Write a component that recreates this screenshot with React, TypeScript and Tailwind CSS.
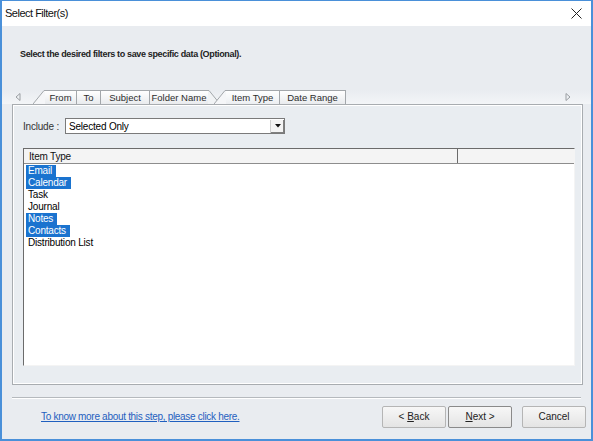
const items = [
  { name: "Email", sel: true },
  { name: "Calendar", sel: true },
  { name: "Task", sel: false },
  { name: "Journal", sel: false },
  { name: "Notes", sel: true },
  { name: "Contacts", sel: true },
  { name: "Distribution List", sel: false },
];

function Slant({ right = false }: { right?: boolean }) {
  // the sloped edge of an Office style tab
  return (
    <svg width="12" height="14" viewBox="0 0 12 14" className="block shrink-0">
      {right ? (
        <>
          <path d="M0 0.5 L1 0.5 L12 14 L0 14 Z" fill="#f1f3f5" />
          <path d="M0 0.5 L1 0.5 L12 14" fill="none" stroke="#a3a7ab" strokeWidth="1" />
        </>
      ) : (
        <>
          <path d="M0 14 L11 0.5 L12 0.5 L12 14 Z" fill="#f5f6f8" />
          <path d="M0 14 L11 0.5 L12 0.5" fill="none" stroke="#a3a7ab" strokeWidth="1" />
        </>
      )}
    </svg>
  );
}

function Tab({
  label,
  width,
  slant,
  active,
  className = "",
}: {
  label: string;
  width: number;
  slant?: "left" | "right";
  active?: boolean;
  className?: string;
}) {
  return (
    <div className={`flex h-[14px] shrink-0 ${className}`} style={{ width }}>
      {slant === "left" ? <Slant /> : null}
      <div
        className={`flex flex-1 items-center justify-center whitespace-nowrap border-t border-[#a3a7ab] text-[9.5px] leading-none text-[#2d2d2d] ${
          slant === "right" ? "" : "border-r"
        } ${active ? "bg-gradient-to-b from-white to-[#eceff2]" : "bg-gradient-to-b from-white to-[#e9ebee]"}`}
      >
        {label}
      </div>
      {slant === "right" ? <Slant right /> : null}
    </div>
  );
}

function Btn({ children, def = false }: { children: React.ReactNode; def?: boolean }) {
  return (
    <button
      className={`flex h-[22px] w-[64px] items-center justify-center rounded-[2px] border bg-gradient-to-b from-[#f7f7f7] to-[#e4e4e4] text-[10px] text-[#222] ${
        def ? "border-[#8a8a8a]" : "border-[#b5b5b5]"
      }`}
    >
      <span className="whitespace-pre">{children}</span>
    </button>
  );
}

export default function App() {
  return (
    <div
      className="flex h-[441px] w-[593px] flex-col overflow-hidden border-x-2 border-t border-b-2 border-[#4a90d9] bg-[#e9ecf0]"
      style={{ fontFamily: '"Liberation Sans", Arial, sans-serif' }}
    >
      <div className="flex h-[25px] shrink-0 items-center justify-between bg-white pl-[3px] pr-[9px]">
        <span className="text-[11px] tracking-[-0.5px] text-[#111]">Select Filter(s)</span>
        <svg width="11" height="11" viewBox="0 0 11 11">
          <path d="M0.5 0.5 L10.5 10.5 M10.5 0.5 L0.5 10.5" stroke="#222" strokeWidth="1" />
        </svg>
      </div>

      <div className="flex flex-1 flex-col">
        <div className="h-[64px] shrink-0 pl-[18px] pt-[22px]">
          <p className="text-[9px] font-bold leading-[12px] tracking-[-0.35px] text-[#222]">
            Select the desired filters to save specific data (Optional).
          </p>
        </div>

        <div className="flex h-[14px] shrink-0 items-end bg-gradient-to-b from-[#e9ecf0] to-[#f3f5f7] pl-[13px] pr-[20px]">
          <svg width="6" height="8" viewBox="0 0 6 8" className="mb-[3px] mr-[12px] shrink-0">
            <path d="M5 0.5 L1 4 L5 7.5 Z" fill="none" stroke="#9a9ea2" />
          </svg>
          <Tab label="From" width={44} slant="left" />
          <Tab label="To" width={24} />
          <Tab label="Subject" width={49} />
          <Tab label="Folder Name" width={70} slant="right" />
          <Tab label="Item Type" width={66} slant="left" active className="-ml-[6px]" />
          <Tab label="Date Range" width={66} />
          <div className="flex-1" />
          <svg width="6" height="8" viewBox="0 0 6 8" className="mb-[3px] shrink-0">
            <path d="M1 0.5 L5 4 L1 7.5 Z" fill="none" stroke="#9a9ea2" />
          </svg>
        </div>

        <div className="ml-[10px] mr-[8px] h-[281px] shrink-0 border border-[#a8acb0] bg-[#e9edf1]">
          <div className="h-full border border-white px-[9px] pt-[12px]">
            <div className="flex h-[16px] items-center">
              <span className="w-[42px] text-[10px] tracking-[-0.2px] text-[#333]">Include :</span>
              <div className="flex h-[16px] w-[220px] items-center border border-[#7a7a7a] bg-white">
                <span className="flex-1 pl-[3px] text-[10px] tracking-[-0.2px] text-black">Selected Only</span>
                <div className="flex h-[13px] w-[14px] items-center justify-center border-l border-[#cfcfcf] bg-[#f4f4f4] shadow-[inset_-1px_-1px_0_#808080]">
                  <svg width="6" height="4" viewBox="0 0 6 4">
                    <path d="M0 0 L6 0 L3 3.5 Z" fill="#111" />
                  </svg>
                </div>
              </div>
            </div>

            <div className="mt-[14px] h-[218px] w-[552px] border-l border-t border-[#6b6b6b] border-b border-r border-b-[#f4f4f4] border-r-[#f4f4f4] bg-white">
              <div className="flex h-[15px] border-b border-[#8d8d8d] bg-[#f4f4f4] text-[10px] tracking-[-0.2px] text-[#111]">
                <div className="flex w-[434px] items-center border-r border-[#6b6b6b] pl-[5px]">Item Type</div>
                <div className="flex-1" />
              </div>
              <div className="pl-[2px] pt-[1px]">
                {items.map((it) => (
                  <div key={it.name} className="flex h-[12px] items-center">
                    <span
                      className={`px-[2px] pr-[4px] text-[10px] leading-[12px] tracking-[-0.2px] ${
                        it.sel ? "bg-[#1a73cf] text-white" : "text-black"
                      }`}
                    >
                      {it.name}
                    </span>
                  </div>
                ))}
              </div>
            </div>
          </div>
        </div>

        <div className="mx-[10px] mt-[12px] h-[2px] shrink-0 border-t border-[#b5b9bd] border-b border-b-white" />

        <div className="flex flex-1 items-center pl-[39px] pr-[5px] pb-[5px]">
          <a href="#" className="text-[10px] tracking-[-0.3px] text-[#1f5fbf] underline">
            To know more about this step, please click here.
          </a>
          <div className="ml-auto flex items-center">
            <Btn>
              {"< "}
              <span className="underline">B</span>
              {"ack"}
            </Btn>
            <div className="ml-[2px]">
              <Btn def>
                <span className="underline">N</span>
                {"ext >"}
              </Btn>
            </div>
            <div className="ml-[10px]">
              <Btn>Cancel</Btn>
            </div>
          </div>
        </div>
      </div>
    </div>
  );
}
